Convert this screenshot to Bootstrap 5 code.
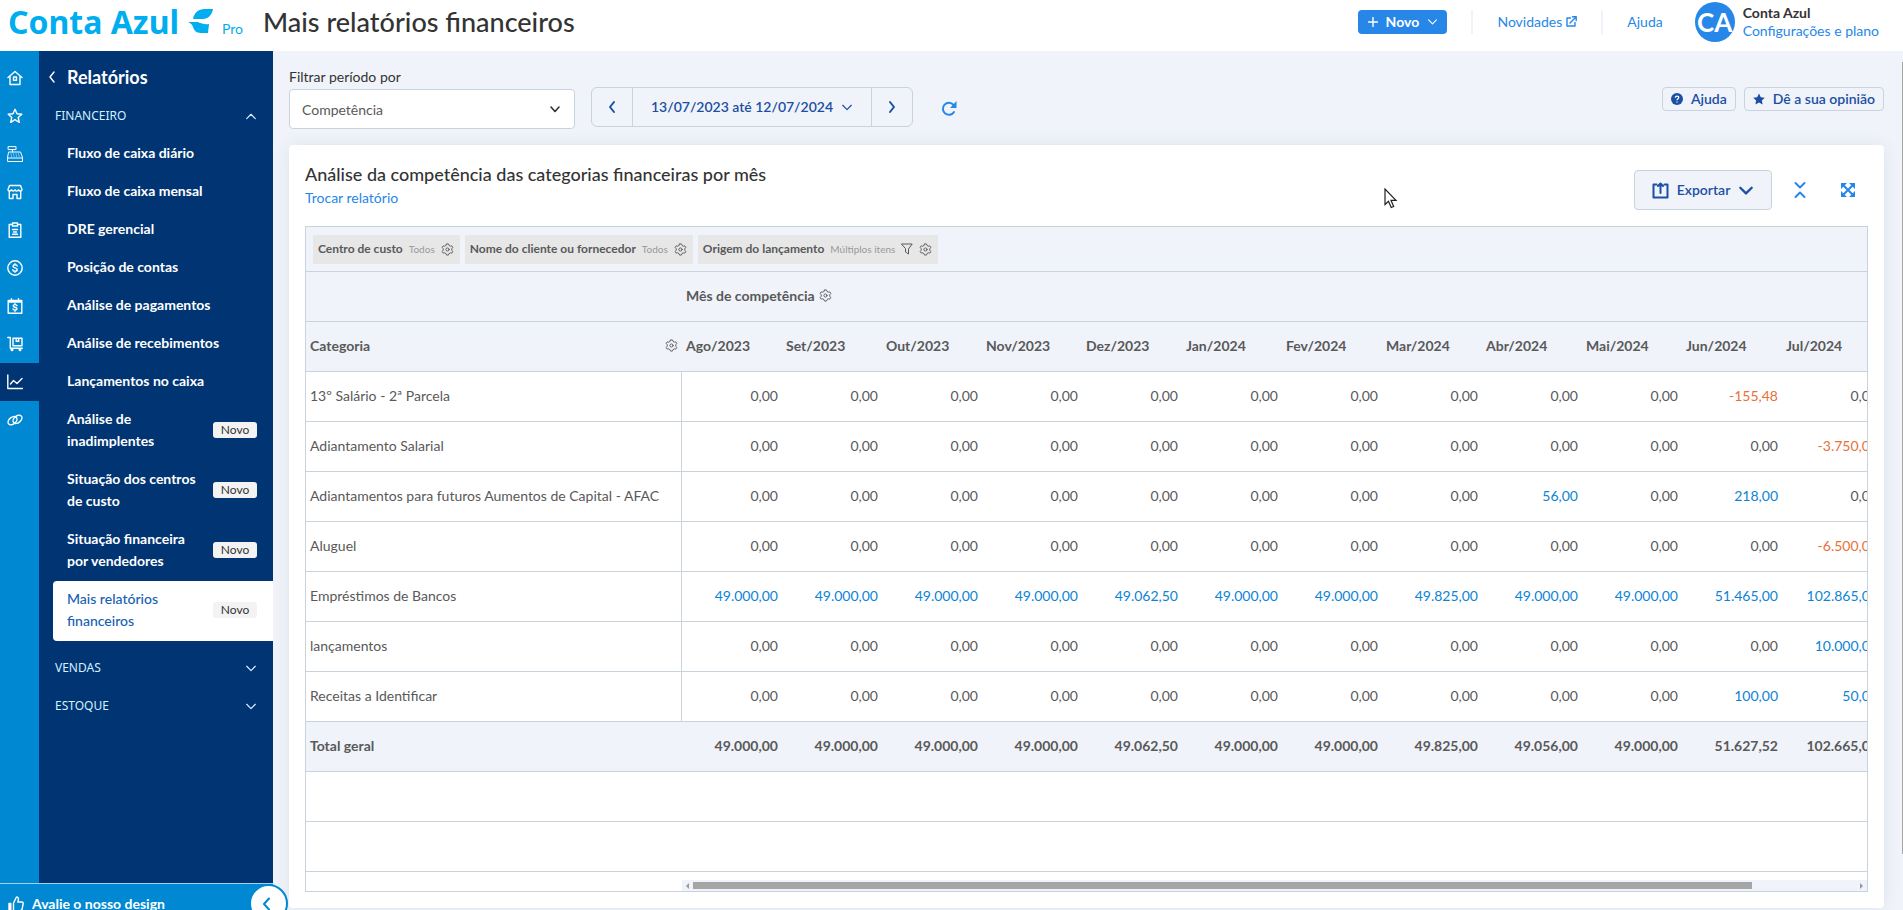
<!DOCTYPE html>
<html lang="pt-BR">
<head>
<meta charset="utf-8">
<meta name="viewport" content="width=device-width, initial-scale=1">
<title>Mais relatórios financeiros</title>
<link href="https://cdn.jsdelivr.net/npm/bootstrap@5.3.0/dist/css/bootstrap.min.css" rel="stylesheet">
<style>
:root{--navy:#003473;--rail:#0089d2;--blue:#2687e9;--deep:#1a4fa3;--line:#c9d3dc;--soft:#f0f3f9;--ink:#333;--cell:#595959}
body{font-family:Lato,"Noto Sans",sans-serif;font-size:14px;line-height:22px;color:var(--ink);background:var(--soft)}
a{text-decoration:none;color:var(--blue)}
svg{display:block;flex:none}
.ico{fill:none;stroke:currentColor;stroke-width:1.4;stroke-linecap:round;stroke-linejoin:round}
.thin{stroke-width:1}
.thick{stroke-width:2}
.topbar{height:51px;background:#fff;padding:0 24px 0 8px}
.brand-name{font:700 32px/34px "Noto Sans",sans-serif;color:#00aeef}
.brand-pro{font-size:14px;color:#00aeef;padding-top:14px}
.page-title{font-size:27px;line-height:30px;font-weight:500;margin-left:20px}
.btn-new{background:var(--blue);color:#fff;font-weight:700;height:24px;width:89px;padding:0;font-size:14px;line-height:22px}
.sep{width:2px;height:24px;background:var(--soft)}
.avatar{width:40px;height:40px;background:var(--blue);color:#fff;font-size:26px;font-weight:700;margin-left:32px}
.rail{width:39px;background:var(--rail);padding-top:8px}
.rail a{height:38px;color:#fff;padding-left:7px}
.rail a.active{background:var(--navy)}
.menu{width:234px;background:var(--navy);color:#fff}
.menu-head{font-size:18px;font-weight:700;padding:15px 0 0 9px;height:46px;gap:10px}
.menu-group{height:38px;padding:0 16px;color:#d3f0ff;background:none;border:0;font:12px/22px "Noto Sans",sans-serif}
.menu a{color:#fff;font-weight:700;padding:7px 16px 9px 28px}
.menu a.active{background:#fff;color:#1560b3;font-weight:500;margin-left:14px;padding-left:14px;border-radius:4px 0 0 4px}
.tag{background:#f3f3f3;color:#333;font-size:12px;font-weight:400;line-height:16px;width:44px;border-radius:3px;text-align:center}
.footer-strip{height:27px}
.rate{height:41px;background:var(--rail);border-top:1px solid #9fd3ef;color:#fff;font-weight:700;width:273px;padding-left:8px;gap:8px}
.rate:hover{color:#fff}
.fold{right:-15px;top:1px;width:39px;height:39px;background:#fff;border:2px solid var(--rail);color:var(--rail);padding:0 3px 0 0}
.content-area{padding:15px 19px 0 16px}
.field-label{margin-bottom:1px}
.pick{width:286px;height:40px;font-size:14px;color:var(--cell);border-color:var(--line);padding:0 12px;background-size:14px 14px;background-image:url("data:image/svg+xml,%3Csvg xmlns='http://www.w3.org/2000/svg' viewBox='0 0 14 14'%3E%3Cpath fill='none' stroke='%23333' stroke-width='1.6' stroke-linecap='round' stroke-linejoin='round' d='M3 5l4 4.500 4-4.500'/%3E%3C/svg%3E")}
.line-btn{border:1px solid var(--line);color:var(--deep);background:var(--soft);font-size:14px;font-weight:600;line-height:22px;padding:0}
.period{height:40px}
.period .line-btn{width:42px}
.period .range{width:240px}
.drop{margin-top:21px}
.small-btn{height:24px}
.export{width:138px;height:40px}
.sheet{background:#fff;border-radius:4px;padding:16px;margin-top:16px;box-shadow:0 0 16px rgba(60,90,140,.1)}
.sheet-title{font-size:18px;line-height:26px}
.sheet-tools{margin:9px 13px 0 0}
.collapse-btn{margin:0 35px 0 22px}
.plain{background:none;border:0;padding:0;color:var(--blue)}
.grid-box{border:1px solid var(--line);margin-top:16px}
.chips{height:45px;background:var(--soft);border-bottom:1px solid var(--line);padding:0 7px;gap:5px}
.chip{background:#e7e7e7;height:29px;padding:0 6px 0 5px;gap:6px;font-size:12px;color:var(--cell)}
.chip em{font-style:normal;font-size:10px;color:#999}
.pivot{table-layout:fixed;width:1776px;border-collapse:separate;border-spacing:0;color:var(--cell)}
.pivot th,.pivot td{height:50px;padding:0 4px 2px;border-bottom:1px solid var(--line);white-space:nowrap}
.pivot td{text-align:right}
.pivot tbody th{font-weight:400;border-right:1px solid var(--line)}
.pivot thead th,.pivot .total>*{background:var(--soft);font-weight:700}
.pivot .total th{border-right:0}
.pivot .first{width:376px}
.up{color:#0c83d3}.down{color:#e8703a}
.hbar{height:11px;margin:8px 0 0 376px;background:var(--soft);padding:0 4px}
.thumb{height:7px;background:#a6a6a6;margin:0 108px 0 4px}
.arr{border:3px solid transparent;width:0;height:0}
.arr-left{border-right-color:#999;border-left-width:0}
.arr-right{border-left-color:#999;border-right-width:0}
.vbar{right:0;top:62px;width:1px;height:87vh;background:#a6a6a6}
.pointer{left:1384px;top:188px}
</style>
</head>
<body>
<svg width="0" height="0" class="position-absolute" aria-hidden="true">
<symbol id="gear" viewBox="0 0 14 14"><path d="M6 1h2l.6 1.600 1.400.8 1.700-.3 1 1.700-1.100 1.400v1.600l1.100 1.400-1 1.700-1.700-.3-1.400.8L8 13H6l-.6-1.600-1.400-.8-1.700.3-1-1.700 1.100-1.400V6.200L1.300 4.800l1-1.700 1.700.3 1.400-.8z"/><circle cx="7" cy="7" r="1.700"/></symbol>
<symbol id="down" viewBox="0 0 14 14"><path d="M2 5l5 5 5-5"/></symbol>
</svg>
<div class="vh-100 overflow-hidden d-flex flex-column position-relative">
<header class="topbar d-flex align-items-center flex-shrink-0">
  <a href="#" class="d-flex align-items-center pb-2"><span class="brand-name">Conta Azul</span>
    <svg class="ms-2" width="27" height="25" viewBox="0 0 27 25" fill="#00aeef"><path d="M26 0h-8C11 0 7 4 6 10h10c5 0 9-4 10-10z"/><path d="M1 13h8c4 0 6 3 13 2l-1 9h-7c-5 0-7-3-8-6-1-3-3-4-5-5z"/></svg>
    <span class="brand-pro ms-2">Pro</span></a>
  <h1 class="page-title mb-0 pb-2">Mais relatórios financeiros</h1>
  <div class="d-flex align-items-center ms-auto pb-2">
    <button class="btn btn-new d-flex align-items-center justify-content-center gap-2 rounded-1"><svg class="ico" width="10" height="10" viewBox="0 0 10 10"><path d="M5 .5v9M.5 5h9"/></svg>Novo<svg class="ico" width="11" height="11"><use href="#down"/></svg></button>
    <span class="sep ms-4"></span>
    <a href="#" class="d-flex align-items-center gap-1 ms-4">Novidades <svg class="ico" width="11" height="11" viewBox="0 0 11 11"><path d="M4.500 2H1v8h8V6.500M4 7l6-6M6.500.8H10.200V4.500"/></svg></a>
    <span class="sep ms-4"></span>
    <a href="#" class="ms-4">Ajuda</a>
    <div class="avatar rounded-circle d-flex align-items-center justify-content-center me-2">CA</div>
    <div class="lh-sm"><b class="d-block">Conta Azul</b><a href="#">Configurações e plano</a></div>
  </div>
</header>
<div class="d-flex flex-grow-1 overflow-hidden">
  <aside class="d-flex flex-column flex-shrink-0 position-relative">
    <div class="d-flex flex-grow-1">
      <nav class="rail" aria-label="Módulos">
        <a href="#" class="d-flex align-items-center" aria-label="Início"><svg class="ico" width="16" height="16" viewBox="0 0 16 16"><path d="M1 7.500 8 1.500l7 6M3 6.500V14.500H13V6.500M6.500 7h3v3.200h-3z"/></svg></a>
        <a href="#" class="d-flex align-items-center" aria-label="Favoritos"><svg class="ico" width="16" height="16" viewBox="0 0 16 16"><path d="M8 1.300l2 4.400 4.800.5-3.600 3.200 1.100 4.900L8 11.700l-4.300 2.600 1.100-4.900L1.200 6.200 6 5.700z"/></svg></a>
        <a href="#" class="d-flex align-items-center" aria-label="Vendas"><svg class="ico thin" width="16" height="16" viewBox="0 0 16 16"><path d="M1.500.6h7.500v3H1.500zM5.500 3.600v2.400M2 6h11.500l2 5.500v4H.6v-4zM.6 12h14.900M4 8h.1M6.500 8h.1M9 8h.1M11.500 8h.1M4.500 10h.1M7 10h.1M9.500 10h.1M12 10h.1"/></svg></a>
        <a href="#" class="d-flex align-items-center" aria-label="Compras"><svg class="ico" width="16" height="16" viewBox="0 0 16 16"><path d="M2.500 1.500h11l1.500 4c0 2-3 2-3.500.3-.5 1.700-3 1.700-3.500 0-.5 1.700-3 1.700-3.500 0C4 7.500 1 7.500 1 5.500zM2.300 7.500v7H6V10.500h4v4h3.700v-7"/></svg></a>
        <a href="#" class="d-flex align-items-center" aria-label="Cadastros"><svg class="ico" width="16" height="16" viewBox="0 0 16 16"><path d="M5 2.500H2.200v12.700h11.600V2.500H11M5.500 1h5v3h-5zM5.500 7.500h5M6.500 10h3M5.500 12.300h5"/></svg></a>
        <a href="#" class="d-flex align-items-center" aria-label="Financeiro"><svg class="ico" width="16" height="16" viewBox="0 0 16 16"><circle cx="8" cy="8" r="7.200"/><path d="M10.200 6c-.3-1.700-4.200-1.700-4.200.2 0 2 4.200 1.300 4.200 3.500 0 2-4.200 1.900-4.400.1M8 3.700v.8M8 11.500v.8"/></svg></a>
        <a href="#" class="d-flex align-items-center" aria-label="Pagamentos"><svg class="ico" width="16" height="16" viewBox="0 0 16 16"><path d="M1.200 2.500h13.600v12.700H1.200zM1.200 4h13.600M4.500.8v3M11.500.8v3M10 7.700c-.3-1.400-3.800-1.400-3.800.2 0 1.600 3.800 1.100 3.800 2.900 0 1.700-3.800 1.600-4 .1M8 5.800v.5M8 12.500v.7"/></svg></a>
        <a href="#" class="d-flex align-items-center" aria-label="Estoque"><svg class="ico" width="16" height="16" viewBox="0 0 16 16"><path d="M.8 1.500h2.500v10.700h12M6 2.200h9v7.500H6zM9.200 2.200v3h2.500v-3"/><circle cx="5" cy="13.700" r=".8"/><circle cx="13" cy="13.700" r=".8"/></svg></a>
        <a href="#" class="d-flex align-items-center active" aria-label="Relatórios"><svg class="ico" width="16" height="16" viewBox="0 0 16 16"><path d="M.8 1v13.500h14.700M3.500 10 6.500 6.500l3.500 3 5-5"/></svg></a>
        <a href="#" class="d-flex align-items-center" aria-label="Integrações"><svg class="ico" width="16" height="16" viewBox="0 0 16 16"><ellipse cx="5.500" cy="8.700" rx="5" ry="3.400" transform="rotate(-40 5.500 8.700)"/><ellipse cx="10.500" cy="7.300" rx="5" ry="3.400" transform="rotate(-40 10.500 7.300)"/></svg></a>
      </nav>
      <nav class="menu" aria-label="Relatórios">
        <div class="menu-head d-flex"><svg class="ico mt-1" width="9" height="14" viewBox="0 0 9 14"><path d="M6 2 2 7l4 5"/></svg>Relatórios</div>
        <button class="menu-group d-flex align-items-center justify-content-between w-100">FINANCEIRO<svg class="ico" width="12" height="12" viewBox="0 0 14 14"><path d="M2 10l5-5 5 5"/></svg></button>
        <a href="#" class="d-block">Fluxo de caixa diário</a>
        <a href="#" class="d-block">Fluxo de caixa mensal</a>
        <a href="#" class="d-block">DRE gerencial</a>
        <a href="#" class="d-block">Posição de contas</a>
        <a href="#" class="d-block">Análise de pagamentos</a>
        <a href="#" class="d-block">Análise de recebimentos</a>
        <a href="#" class="d-block">Lançamentos no caixa</a>
        <a href="#" class="d-flex align-items-center justify-content-between"><span>Análise de<br>inadimplentes</span><span class="tag">Novo</span></a>
        <a href="#" class="d-flex align-items-center justify-content-between"><span>Situação dos centros<br>de custo</span><span class="tag">Novo</span></a>
        <a href="#" class="d-flex align-items-center justify-content-between"><span>Situação financeira<br>por vendedores</span><span class="tag">Novo</span></a>
        <a href="#" class="d-flex align-items-center justify-content-between active"><span>Mais relatórios<br>financeiros</span><span class="tag">Novo</span></a>
        <button class="menu-group d-flex align-items-center justify-content-between w-100 mt-2">VENDAS<svg class="ico" width="12" height="12"><use href="#down"/></svg></button>
        <button class="menu-group d-flex align-items-center justify-content-between w-100">ESTOQUE<svg class="ico" width="12" height="12"><use href="#down"/></svg></button>
      </nav>
    </div>
    <div class="footer-strip position-relative flex-shrink-0">
      <a href="#" class="rate d-flex align-items-center"><svg class="ico" width="16" height="16" viewBox="0 0 16 16"><path d="M5.500 7 8.500 1c2.300 0 2.300 2 1.300 5h4c1.300 0 1.500 1 1.300 2l-1 5c-.3 1.300-1 1.700-2 1.700H5.500z"/><path fill="currentColor" d="M1 7.500h1.800v7H1z"/></svg>Avalie o nosso design</a>
      <button class="fold position-absolute rounded-circle d-flex align-items-center justify-content-center" aria-label="Recolher menu"><svg class="ico thick" width="14" height="14" viewBox="0 0 14 14"><path d="M9 1.500 4 7l5 5.500"/></svg></button>
    </div>
  </aside>
  <main class="content-area flex-grow-1 overflow-hidden">
    <div class="d-flex align-items-start">
      <div><label for="basis" class="field-label d-block">Filtrar período por</label>
        <select id="basis" class="form-select pick rounded-1"><option>Competência</option></select></div>
      <div class="btn-group period drop ms-3" role="group" aria-label="Período">
        <button class="btn line-btn d-flex align-items-center justify-content-center" aria-label="Período anterior"><svg class="ico thick" width="14" height="14" viewBox="0 0 14 14"><path d="M9 2 5 7l4 5"/></svg></button>
        <button class="btn line-btn range d-flex align-items-center justify-content-center gap-2">13/07/2023 até 12/07/2024<svg class="ico" width="12" height="12"><use href="#down"/></svg></button>
        <button class="btn line-btn d-flex align-items-center justify-content-center" aria-label="Próximo período"><svg class="ico thick" width="14" height="14" viewBox="0 0 14 14"><path d="M5 2l4 5-4 5"/></svg></button>
      </div>
      <button class="plain drop ms-4 pt-2 ps-1" aria-label="Atualizar"><svg class="ico thick" width="16" height="28" viewBox="0 -6 16 28"><path d="M13 11A6 6 0 1 1 12.500 4"/><path fill="currentColor" stroke="none" d="M15.500 0v7H9z"/></svg></button>
      <div class="d-flex gap-2 ms-auto drop">
        <button class="btn line-btn small-btn px-2 d-flex align-items-center gap-2 rounded-1"><svg width="12" height="12" viewBox="0 0 12 12"><circle cx="6" cy="6" r="6" fill="#1a4fa3"/><path d="M4.300 4.700c0-2.200 3.500-2 3.500-.1C7.800 5.800 6 5.700 6 7.200M6 8.600v1" fill="none" stroke="#fff" stroke-width="1.300"/></svg>Ajuda</button>
        <button class="btn line-btn small-btn px-2 d-flex align-items-center gap-2 rounded-1"><svg width="12" height="12" viewBox="0 0 16 16" fill="#1a4fa3"><path d="M8 .5l2.400 5 5.300.7-3.900 3.700 1 5.400L8 12.700l-4.800 2.600 1-5.400L.3 6.200l5.300-.7z"/></svg>Dê a sua opinião</button>
      </div>
    </div>
    <section class="sheet">
      <div class="d-flex align-items-start">
        <div><h2 class="sheet-title mb-0">Análise da competência das categorias financeiras por mês</h2><a href="#">Trocar relatório</a></div>
        <div class="sheet-tools d-flex align-items-center ms-auto">
          <button class="btn line-btn export d-flex align-items-center justify-content-center gap-2 rounded-1"><svg class="ico thick" width="17" height="17" viewBox="0 0 17 17"><path d="M4.500 2.500H1.500v13h14v-13H12.500M8.500 11V2M6 4l2.500-2.500L11 4"/></svg>Exportar<svg class="ico thick" width="16" height="16"><use href="#down"/></svg></button>
          <button class="plain collapse-btn" aria-label="Recolher linhas"><svg class="ico thick" width="12" height="18" viewBox="0 0 12 18"><path d="M1.500 2l4.500 4.500L10.500 2M1.500 16 6 11.500l4.500 4.500"/></svg></button>
          <button class="plain" aria-label="Tela cheia"><svg class="ico thick" width="14" height="14" viewBox="0 0 14 14"><path d="M2 2l10 10M12 2 2 12"/><path fill="currentColor" stroke="none" d="M0 0h6L0 6zM14 0v6L8 0zM0 14V8l6 6zM14 14H8l6-6z"/></svg></button>
        </div>
      </div>
      <div class="grid-box overflow-hidden">
        <div class="chips d-flex align-items-center">
          <div class="chip d-flex align-items-center"><b>Centro de custo</b><em>Todos</em><svg class="ico thin" width="13" height="13"><use href="#gear"/></svg></div>
          <div class="chip d-flex align-items-center"><b>Nome do cliente ou fornecedor</b><em>Todos</em><svg class="ico thin" width="13" height="13"><use href="#gear"/></svg></div>
          <div class="chip d-flex align-items-center"><b>Origem do lançamento</b><em>Múltiplos itens</em><svg class="ico thin" width="12" height="12" viewBox="0 0 12 12"><path d="M.8 1h10.400L7.500 6v5L4.500 9V6z"/></svg><svg class="ico thin" width="13" height="13"><use href="#gear"/></svg></div>
        </div>
        <table class="pivot">
          <colgroup><col class="first"><col span="14"></colgroup>
          <thead>
            <tr><th></th><th colspan="14"><span class="d-flex align-items-center gap-1">Mês de competência <svg class="ico thin" width="13" height="13"><use href="#gear"/></svg></span></th></tr>
            <tr><th><span class="d-flex align-items-center justify-content-between">Categoria<svg class="ico thin" width="13" height="13"><use href="#gear"/></svg></span></th><th>Ago/2023</th><th>Set/2023</th><th>Out/2023</th><th>Nov/2023</th><th>Dez/2023</th><th>Jan/2024</th><th>Fev/2024</th><th>Mar/2024</th><th>Abr/2024</th><th>Mai/2024</th><th>Jun/2024</th><th>Jul/2024</th><th colspan="2"></th></tr>
          </thead>
          <tbody>
            <tr><th>13º Salário - 2ª Parcela</th><td>0,00</td><td>0,00</td><td>0,00</td><td>0,00</td><td>0,00</td><td>0,00</td><td>0,00</td><td>0,00</td><td>0,00</td><td>0,00</td><td class="down">-155,48</td><td>0,00</td><td colspan="2"></td></tr>
            <tr><th>Adiantamento Salarial</th><td>0,00</td><td>0,00</td><td>0,00</td><td>0,00</td><td>0,00</td><td>0,00</td><td>0,00</td><td>0,00</td><td>0,00</td><td>0,00</td><td>0,00</td><td class="down">-3.750,00</td><td colspan="2"></td></tr>
            <tr><th>Adiantamentos para futuros Aumentos de Capital - AFAC</th><td>0,00</td><td>0,00</td><td>0,00</td><td>0,00</td><td>0,00</td><td>0,00</td><td>0,00</td><td>0,00</td><td class="up">56,00</td><td>0,00</td><td class="up">218,00</td><td>0,00</td><td colspan="2"></td></tr>
            <tr><th>Aluguel</th><td>0,00</td><td>0,00</td><td>0,00</td><td>0,00</td><td>0,00</td><td>0,00</td><td>0,00</td><td>0,00</td><td>0,00</td><td>0,00</td><td>0,00</td><td class="down">-6.500,00</td><td colspan="2"></td></tr>
            <tr><th>Empréstimos de Bancos</th><td class="up">49.000,00</td><td class="up">49.000,00</td><td class="up">49.000,00</td><td class="up">49.000,00</td><td class="up">49.062,50</td><td class="up">49.000,00</td><td class="up">49.000,00</td><td class="up">49.825,00</td><td class="up">49.000,00</td><td class="up">49.000,00</td><td class="up">51.465,00</td><td class="up">102.865,00</td><td colspan="2"></td></tr>
            <tr><th>lançamentos</th><td>0,00</td><td>0,00</td><td>0,00</td><td>0,00</td><td>0,00</td><td>0,00</td><td>0,00</td><td>0,00</td><td>0,00</td><td>0,00</td><td>0,00</td><td class="up">10.000,00</td><td colspan="2"></td></tr>
            <tr><th>Receitas a Identificar</th><td>0,00</td><td>0,00</td><td>0,00</td><td>0,00</td><td>0,00</td><td>0,00</td><td>0,00</td><td>0,00</td><td>0,00</td><td>0,00</td><td class="up">100,00</td><td class="up">50,00</td><td colspan="2"></td></tr>
            <tr class="total"><th>Total geral</th><td>49.000,00</td><td>49.000,00</td><td>49.000,00</td><td>49.000,00</td><td>49.062,50</td><td>49.000,00</td><td>49.000,00</td><td>49.825,00</td><td>49.056,00</td><td>49.000,00</td><td>51.627,52</td><td>102.665,00</td><td colspan="2"></td></tr>
            <tr><td colspan="15"></td></tr>
            <tr><td colspan="15"></td></tr>
          </tbody>
        </table>
        <div class="hbar d-flex align-items-center"><span class="arr arr-left"></span><span class="thumb flex-grow-1"></span><span class="arr arr-right"></span></div>
      </div>
    </section>
  </main>
</div>
<div class="vbar position-absolute"></div>
<svg class="pointer position-absolute" width="14" height="21" viewBox="0 0 14 21" fill="#fff" stroke="#222" stroke-width="1.200"><path d="M1 1v15.500l3.500-3.300 2.700 6.300 2.500-1-2.700-6.200H12z"/></svg>
</div>
<script src="https://cdn.jsdelivr.net/npm/bootstrap@5.3.0/dist/js/bootstrap.bundle.min.js"></script>
</body>
</html>
